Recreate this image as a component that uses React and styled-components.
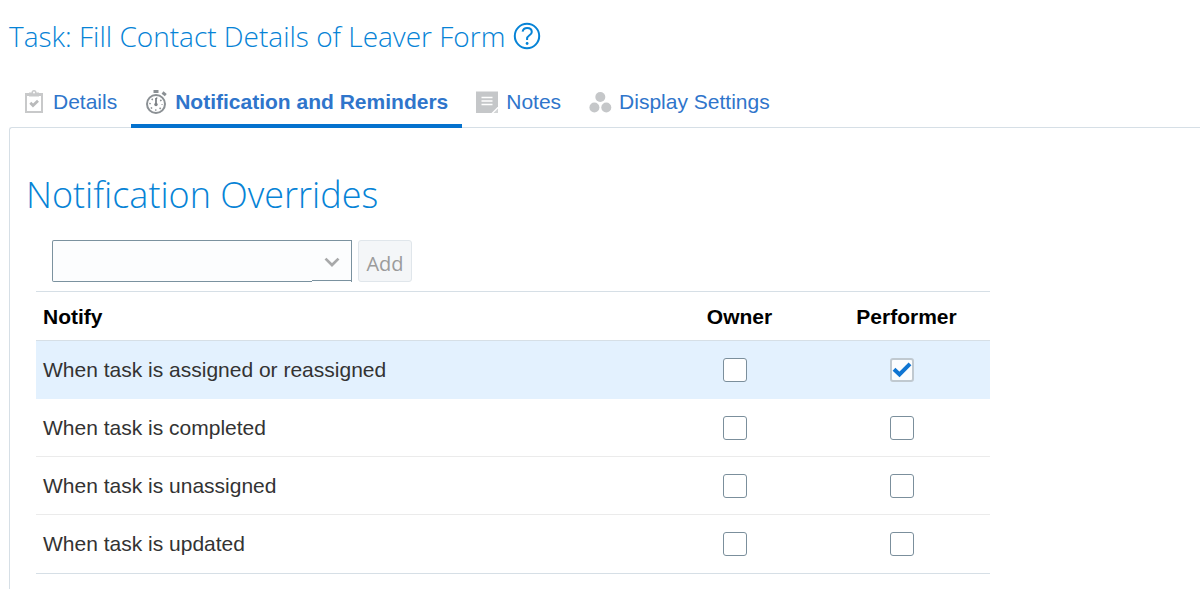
import React, { useState } from 'react';
import styled, { createGlobalStyle } from 'styled-components';

const GlobalStyle = createGlobalStyle`
  * {
    box-sizing: border-box;
  }

  body {
    margin: 0;
    background-color: #ffffff;
    color: #333333;
    font-family: 'Liberation Sans', Arial, sans-serif;
    font-size: 21px;
  }
`;

const Page = styled.div`
  display: flex;
  flex-direction: column;
  min-height: 100vh;
  padding-left: 9px;
`;

const TitleBar = styled.header`
  display: flex;
  align-items: center;
  gap: 8px;
  padding-top: 16px;
`;

const Title = styled.h1`
  margin: 0;
  color: #0683d6;
  font-family: 'Open Sans', 'Segoe UI', sans-serif;
  font-size: 28px;
  font-weight: 300;
  line-height: 40px;
`;

const HelpButton = styled.button`
  display: flex;
  padding: 0;
  border: none;
  background: none;
  color: #0683d6;
  cursor: pointer;
`;

const Tabs = styled.nav`
  display: flex;
  position: relative;
  margin-top: 20px;
  margin-bottom: -1px;
`;

const Tab = styled.a`
  display: flex;
  align-items: center;
  gap: 6px;
  height: 52px;
  padding: 4px 14px 0;
  border-bottom: 4px solid ${({ $active }) => ($active ? '#0572ce' : 'transparent')};
  color: #2f75cb;
  font-weight: ${({ $active }) => ($active ? 'bold' : 'normal')};
  text-decoration: none;
  white-space: nowrap;
`;

const Panel = styled.main`
  flex: 1;
  padding: 39px 16px 15px;
  border-top: 1px solid #d6dfe6;
  border-left: 1px solid #d6dfe6;
  border-top-left-radius: 3px;
`;

const SectionTitle = styled.h2`
  margin: 0;
  color: #0683d6;
  font-family: 'Open Sans', 'Segoe UI', sans-serif;
  font-size: 36px;
  font-weight: 300;
  line-height: 56px;
`;

const Toolbar = styled.div`
  display: flex;
  gap: 6px;
  padding: 17px 0 9px 26px;
`;

const SelectBox = styled.div`
  position: relative;
  width: 300px;

  svg {
    position: absolute;
    top: 16px;
    right: 12px;
    pointer-events: none;
  }
`;

/* The bottom edge steps up by one pixel under the arrow */
const Select = styled.select`
  display: block;
  width: 100%;
  height: 42px;
  padding: 0 40px 0 8px;
  border: 1px solid #7b929f;
  border-bottom: none;
  border-radius: 2px 0 0 2px;
  appearance: none;
  background:
    linear-gradient(#7b929f, #7b929f) left bottom / 259px 1px no-repeat,
    linear-gradient(#7b929f, #7b929f) right bottom 1px / 39px 1px no-repeat,
    #fcfdfe;
  color: #333333;
  font: inherit;
`;

const AddButton = styled.button`
  min-width: 54px;
  height: 42px;
  padding: 4px 7px 0;
  border: 1px solid #e0e6eb;
  border-radius: 3px;
  background-color: #f4f6f8;
  color: #9b9b9b;
  font-family: 'Open Sans', 'Segoe UI', sans-serif;
  font-size: 20px;
`;

const Table = styled.table`
  width: calc(100% - 10px);
  max-width: 954px;
  margin-left: 10px;
  border-top: 1px solid #d6dfe6;
  border-bottom: 1px solid #d6dfe6;
  border-collapse: separate;
  border-spacing: 0;
  table-layout: fixed;
`;

const HeadCell = styled.th`
  width: ${({ $wide }) => ($wide ? 'auto' : '167px')};
  height: 49px;
  padding: 2px 7px 0;
  border-bottom: 1px solid #d6dfe6;
  color: #000000;
  text-align: ${({ $wide }) => ($wide ? 'left' : 'center')};
`;

const Cell = styled.td`
  height: 58px;
  padding: 0 7px;
`;

const CheckCell = styled(Cell)`
  padding-right: 17px;
`;

const Row = styled.tr`
  background-color: ${({ $selected }) => ($selected ? '#e3f1fe' : 'transparent')};

  &:not(:first-child):not(:last-child) ${Cell} {
    padding-top: 1px;
    border-bottom: 1px solid #ebebeb;
  }
`;

const CheckLabel = styled.label`
  display: block;
  position: relative;
  width: 24px;
  height: 24px;
  margin: 0 auto;

  svg {
    position: absolute;
    top: 0;
    left: 0;
    pointer-events: none;
  }
`;

const Checkbox = styled.input`
  display: block;
  width: 24px;
  height: 24px;
  margin: 0;
  border: 1px solid #7b8f9c;
  border-radius: 3px;
  appearance: none;
  background-color: #ffffff;

  &:checked {
    border: 2px solid #c0c9d0;
    background-color: #fcfdfe;
  }
`;

const HelpIcon = () => (
  <svg width="28" height="28" viewBox="0 0 28 28" fill="none" stroke="currentColor" strokeWidth="2">
    <circle cx="14" cy="14" r="12.2" />
    <path d="M9.6 9.6C10.1 7.2 11.9 6 14.1 6C16.9 6 18.8 7.6 18.8 10C18.8 13.2 14.1 13.4 14.1 16.6V18" />
    <circle cx="14.1" cy="21.5" r="1.4" fill="currentColor" stroke="none" />
  </svg>
);

const DetailsIcon = () => (
  <svg width="24" height="28" viewBox="0 0 24 28" fill="none">
    <path d="M3 7V24H19V7" stroke="#c8c9ca" strokeWidth="2" />
    <path d="M2 5H6V7H16V5H20V8H2Z" fill="#c8c9ca" />
    <path d="M6 4.500H8.500A2.500 2.500 0 0 1 13.500 4.500H16V8.500H6Z" fill="#c8c9ca" />
    <circle cx="11" cy="4.500" r="1" fill="#ffffff" />
    <path d="M7.300 14.800L10 17.500L15 12.800" stroke="#b9babb" strokeWidth="2.800" />
  </svg>
);

const StopwatchIcon = () => (
  <svg width="24" height="28" viewBox="0 0 24 28" fill="none">
    <rect x="8.500" y="2" width="5" height="3" fill="#8b9094" />
    <circle cx="11" cy="16" r="9" stroke="#8b9094" strokeWidth="2" />
    <path d="M17.500 4.500L20.800 7.200" stroke="#8b9094" strokeWidth="3" />
    <circle cx="11" cy="16" r="6" stroke="#8b9094" strokeWidth="1.600" strokeDasharray="1.400 3.312" strokeDashoffset="0.7" />
    <path d="M11 10V17" stroke="#6f7478" strokeWidth="1.600" />
    <circle cx="11" cy="16.500" r="1.700" fill="#7d8286" />
  </svg>
);

const NotesIcon = () => (
  <svg width="24" height="28" viewBox="0 0 24 28" fill="none">
    <path d="M0 3.500H22V18.500L15.500 25H0Z" fill="#c5c7c9" />
    <path d="M22 20.500V25H17.500Z" fill="#d2d4d5" />
    <path d="M5.500 9.500H16.500M5.500 13H16.500M5.500 16.500H16.500" stroke="#ffffff" strokeWidth="1.500" />
  </svg>
);

const DisplayIcon = () => (
  <svg width="24" height="28" viewBox="0 0 24 28" fill="#c5c7c9">
    <circle cx="11.300" cy="9" r="5" />
    <circle cx="5.400" cy="19.500" r="5" />
    <circle cx="17.300" cy="19.500" r="5" />
  </svg>
);

const ChevronIcon = () => (
  <svg width="16" height="12" viewBox="0 0 16 12" fill="none" stroke="#a8a9aa" strokeWidth="2.700">
    <path d="M1.500 2.600L8 9L14.500 2.600" />
  </svg>
);

const CheckIcon = () => (
  <svg width="24" height="24" viewBox="0 0 24 24" fill="none" stroke="#0f75d2" strokeWidth="4">
    <path d="M4 11.300L9.500 16.500L20 5.800" />
  </svg>
);

const tabs = [
  { id: 'details', label: 'Details', Icon: DetailsIcon },
  { id: 'notification', label: 'Notification and Reminders', Icon: StopwatchIcon },
  { id: 'notes', label: 'Notes', Icon: NotesIcon },
  { id: 'display', label: 'Display Settings', Icon: DisplayIcon },
];

const initialRows = [
  { label: 'When task is assigned or reassigned', owner: false, performer: true },
  { label: 'When task is completed', owner: false, performer: false },
  { label: 'When task is unassigned', owner: false, performer: false },
  { label: 'When task is updated', owner: false, performer: false },
];

const NotifyCheck = ({ label, checked, onChange }) => (
  <CheckLabel>
    <Checkbox type="checkbox" aria-label={label} checked={checked} onChange={onChange} />
    {checked && <CheckIcon />}
  </CheckLabel>
);

const App = () => {
  const [activeTab, setActiveTab] = useState('notification');
  const [rows, setRows] = useState(initialRows);

  const toggle = (index, role) => {
    setRows(rows.map((row, i) => (i === index ? { ...row, [role]: !row[role] } : row)));
  };

  return (
    <Page>
      <GlobalStyle />
      <TitleBar>
        <Title>Task: Fill Contact Details of Leaver Form</Title>
        <HelpButton type="button" aria-label="Help">
          <HelpIcon />
        </HelpButton>
      </TitleBar>
      <Tabs>
        {tabs.map(({ id, label, Icon }) => (
          <Tab key={id} href={`#${id}`} $active={id === activeTab} onClick={() => setActiveTab(id)}>
            <Icon />
            {label}
          </Tab>
        ))}
      </Tabs>
      <Panel>
        <SectionTitle>Notification Overrides</SectionTitle>
        <Toolbar>
          <SelectBox>
            <Select aria-label="Role" defaultValue="">
              <option value="" />
            </Select>
            <ChevronIcon />
          </SelectBox>
          <AddButton type="button" disabled>Add</AddButton>
        </Toolbar>
        <Table>
          <thead>
            <tr>
              <HeadCell scope="col" $wide>Notify</HeadCell>
              <HeadCell scope="col">Owner</HeadCell>
              <HeadCell scope="col">Performer</HeadCell>
            </tr>
          </thead>
          <tbody>
            {rows.map((row, index) => (
              <Row key={row.label} $selected={index === 0}>
                <Cell>{row.label}</Cell>
                <CheckCell>
                  <NotifyCheck
                    label={`${row.label}: Owner`}
                    checked={row.owner}
                    onChange={() => toggle(index, 'owner')}
                  />
                </CheckCell>
                <CheckCell>
                  <NotifyCheck
                    label={`${row.label}: Performer`}
                    checked={row.performer}
                    onChange={() => toggle(index, 'performer')}
                  />
                </CheckCell>
              </Row>
            ))}
          </tbody>
        </Table>
      </Panel>
    </Page>
  );
};

export default App;
